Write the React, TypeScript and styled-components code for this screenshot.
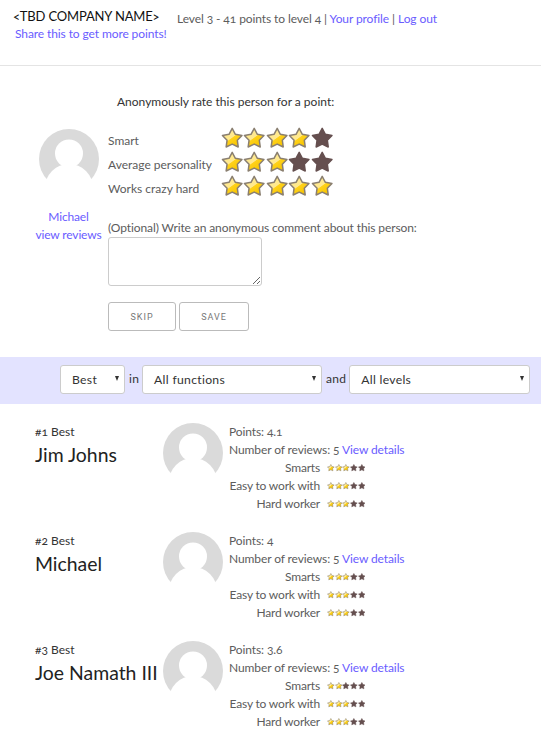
import React from 'react';
import styled, { createGlobalStyle } from 'styled-components';

const BODY_FONT = '"Lato", "Open Sans", sans-serif';

const GlobalStyle = createGlobalStyle`
  html, body {
    margin: 0;
    padding: 0;
    background: #fff;
  }
  body {
    font-family: ${BODY_FONT};
    font-size: 12px;
    color: #5c5c5c;
    font-variant-numeric: oldstyle-nums;
  }
  * {
    box-sizing: border-box;
  }
`;

const Link = styled.a`
  color: #6a5cff;
  text-decoration: none;
`;

const Header = styled.header`
  height: 66px;
  border-bottom: 1px solid #e4e4e4;
  display: flex;
  align-items: flex-start;
`;

const Brand = styled.div`
  width: 177px;
  padding: 9px 0 0 13px;
`;

const BrandName = styled.div`
  font-size: 13px;
  line-height: 15px;
  letter-spacing: -0.17px;
  color: #111;
  white-space: nowrap;
`;

const ShareLink = styled(Link)`
  display: block;
  margin: 3px 0 0 2px;
  font-size: 12px;
  line-height: 14px;
  letter-spacing: -0.1px;
  white-space: nowrap;
`;

const UserBar = styled.div`
  padding-top: 12px;
  font-size: 12px;
  line-height: 14px;
  letter-spacing: -0.09px;
  white-space: nowrap;
`;

const RatePanel = styled.section`
  height: 291px;
  padding: 29px 0 0 0;
`;

const RateTitle = styled.div`
  margin-left: 117px;
  font-size: 12px;
  line-height: 14px;
  color: #333;
`;

const RateBody = styled.div`
  display: flex;
  margin-top: 13px;
`;

const PersonColumn = styled.div`
  width: 108px;
  padding: 7px 1px 0 30px;
  display: flex;
  flex-direction: column;
  align-items: center;
  flex-shrink: 0;
`;

const PersonLink = styled(Link)`
  font-size: 12px;
  line-height: 18px;
  letter-spacing: -0.15px;
  white-space: nowrap;
`;

const PersonName = styled(PersonLink)`
  margin-top: 19px;
`;

const RateColumn = styled.div`
  flex: 1;
  padding-top: 6px;
`;

const RateRow = styled.div`
  display: flex;
  align-items: center;
  height: 24px;
`;

const RateLabel = styled.div`
  width: 113px;
  font-size: 12px;
  white-space: nowrap;
`;

const Stars = styled.div<{ $lift: number }>`
  display: flex;
  line-height: 0;
  margin-bottom: ${({ $lift }) => $lift}px;
`;

const CommentLabel = styled.div`
  margin-top: 21px;
  font-size: 12px;
  line-height: 14px;
  letter-spacing: -0.1px;
  white-space: nowrap;
`;

const CommentBox = styled.textarea`
  display: block;
  width: 154px;
  height: 49px;
  margin-top: 2px;
  border: 1px solid #ccc;
  border-radius: 3px;
  background: #fff;
`;

const ButtonRow = styled.div`
  display: flex;
  gap: 3px;
  margin-top: 16px;
`;

const ActionButton = styled.button<{ $width: number }>`
  width: ${({ $width }) => $width}px;
  height: 29px;
  padding: 0;
  border: 1px solid #bbb;
  border-radius: 3px;
  background: #fff;
  color: #777;
  font-family: "Roboto", sans-serif;
  font-size: 9px;
  letter-spacing: 1px;
  text-transform: uppercase;
`;

const FilterBar = styled.div`
  height: 47px;
  background: #e3e3ff;
  display: flex;
  align-items: center;
  padding: 0 0 2px 60px;
  color: #333;
  font-size: 12px;
`;

const FilterWord = styled.span`
  margin: 0 3px 2px 4px;
  letter-spacing: 0.25px;
`;

const SelectBox = styled.div<{ $width: number }>`
  position: relative;
  width: ${({ $width }) => $width}px;
  height: 29px;
  padding-left: 11px;
  display: flex;
  align-items: center;
  background: #fff;
  border: 1px solid #ccc;
  border-radius: 3px;
  color: #333;
  font-size: 12.2px;
  letter-spacing: 0.3px;
`;

const SelectCaret = styled.span`
  position: absolute;
  right: 5px;
  top: 10px;
  width: 0;
  height: 0;
  border-left: 2.5px solid transparent;
  border-right: 2.5px solid transparent;
  border-top: 5px solid #333;
`;

const RankList = styled.div`
  padding: 19px 0 0 35px;
`;

const RankRow = styled.article`
  display: flex;
  height: 109px;
`;

const RankName = styled.div`
  width: 128px;
  flex-shrink: 0;
  padding-top: 2px;
`;

const RankTag = styled.div`
  font-size: 12px;
  line-height: 13px;
  color: #333;
`;

const PersonTitle = styled.div`
  margin-top: 5px;
  font-size: 19.4px;
  line-height: 24px;
  color: #222;
  white-space: nowrap;
`;

const RankDetails = styled.div`
  margin-left: 6px;
  font-size: 12px;
  line-height: 18px;
  letter-spacing: -0.1px;
`;

const ScoreRow = styled.div`
  display: grid;
  grid-template-columns: 91px auto;
  column-gap: 7px;
  align-items: center;
`;

const ScoreLabel = styled.div`
  text-align: right;
  white-space: nowrap;
  letter-spacing: -0.18px;
`;

const DARK_STAR = '#654f4f';

const Star: React.FC<{ size: number; filled: boolean; id: string }> = ({ size, filled, id }) => (
  <svg width={size} height={size} viewBox="0 0 24 24">
    {filled ? (
      <defs>
        <linearGradient id={id} x1="0.2" y1="0.1" x2="0.8" y2="0.9">
          <stop offset="0.48" stopColor="#ffe98f" />
          <stop offset="0.52" stopColor="#ffd21a" />
          <stop offset="1" stopColor="#f7c400" />
        </linearGradient>
      </defs>
    ) : null}
    <path
      d="M12 1.5L15.41 7.81 22.46 9.1 17.52 14.29 18.47 21.4 12 18.3 5.53 21.4 6.48 14.29 1.54 9.1 8.59 7.81z"
      fill={filled ? `url(#${id})` : DARK_STAR}
      stroke={filled ? '#8a7f70' : DARK_STAR}
      strokeWidth="1.6"
      strokeLinejoin="round"
    />
  </svg>
);

const StarRating: React.FC<{ value: number; size: number; name: string; lift?: number }> = ({
  value,
  size,
  name,
  lift = 0,
}) => (
  <Stars $lift={lift}>
    {[0, 1, 2, 3, 4].map((i) => (
      <Star key={i} size={size} filled={i < value} id={`${name}-${i}`} />
    ))}
  </Stars>
);

const AvatarSvg = styled.svg`
  display: block;
  flex-shrink: 0;
`;

const Avatar: React.FC<{ size: number }> = ({ size }) => (
  <AvatarSvg width={size} height={size} viewBox="0 0 60 60">
    <circle cx="30" cy="30" r="30" fill="#dadada" />
    <circle cx="30" cy="24.5" r="14" fill="#fff" />
    <ellipse cx="30" cy="59" rx="24" ry="24" fill="#fff" />
  </AvatarSvg>
);

const people = [
  { rank: 1, name: 'Jim Johns', points: '4.1', stars: [3, 3, 3] },
  { rank: 2, name: 'Michael', points: '4', stars: [3, 3, 3] },
  { rank: 3, name: 'Joe Namath III', points: '3.6', stars: [2, 3, 3] },
];

const scoreLabels = ['Smarts', 'Easy to work with', 'Hard worker'];

const rateRows = [
  { label: 'Smart', value: 4 },
  { label: 'Average personality', value: 3 },
  { label: 'Works crazy hard', value: 5 },
];

const Select: React.FC<{ width: number; label: string }> = ({ width, label }) => (
  <SelectBox $width={width}>
    {label}
    <SelectCaret />
  </SelectBox>
);

export default function App() {
  return (
    <>
      <GlobalStyle />
      <Header>
        <Brand>
          <BrandName>&lt;TBD COMPANY NAME&gt;</BrandName>
          <ShareLink href="#">Share this to get more points!</ShareLink>
        </Brand>
        <UserBar>
          Level 3 - 41 points to level 4 | <Link href="#">Your profile</Link> | <Link href="#">Log out</Link>
        </UserBar>
      </Header>
      <RatePanel>
        <RateTitle>Anonymously rate this person for a point:</RateTitle>
        <RateBody>
          <PersonColumn>
            <Avatar size={60} />
            <PersonName href="#">Michael</PersonName>
            <PersonLink href="#">view reviews</PersonLink>
          </PersonColumn>
          <RateColumn>
            {rateRows.map((row) => (
              <RateRow key={row.label}>
                <RateLabel>{row.label}</RateLabel>
                <StarRating value={row.value} size={22.4} lift={4} name={`rate-${row.value}`} />
              </RateRow>
            ))}
            <CommentLabel>(Optional) Write an anonymous comment about this person:</CommentLabel>
            <CommentBox />
            <ButtonRow>
              <ActionButton $width={68}>Skip</ActionButton>
              <ActionButton $width={70}>Save</ActionButton>
            </ButtonRow>
          </RateColumn>
        </RateBody>
      </RatePanel>
      <FilterBar>
        <Select width={65} label="Best" />
        <FilterWord>in</FilterWord>
        <Select width={180} label="All functions" />
        <FilterWord>and</FilterWord>
        <Select width={181} label="All levels" />
      </FilterBar>
      <RankList>
        {people.map((person) => (
          <RankRow key={person.rank}>
            <RankName>
              <RankTag>#{person.rank} Best</RankTag>
              <PersonTitle>{person.name}</PersonTitle>
            </RankName>
            <Avatar size={60} />
            <RankDetails>
              <div>Points: {person.points}</div>
              <div>
                Number of reviews: 5 <Link href="#">View details</Link>
              </div>
              {scoreLabels.map((label, i) => (
                <ScoreRow key={label}>
                  <ScoreLabel>{label}</ScoreLabel>
                  <StarRating value={person.stars[i]} size={7.7} name={`p${person.rank}-${i}`} />
                </ScoreRow>
              ))}
            </RankDetails>
          </RankRow>
        ))}
      </RankList>
    </>
  );
}
